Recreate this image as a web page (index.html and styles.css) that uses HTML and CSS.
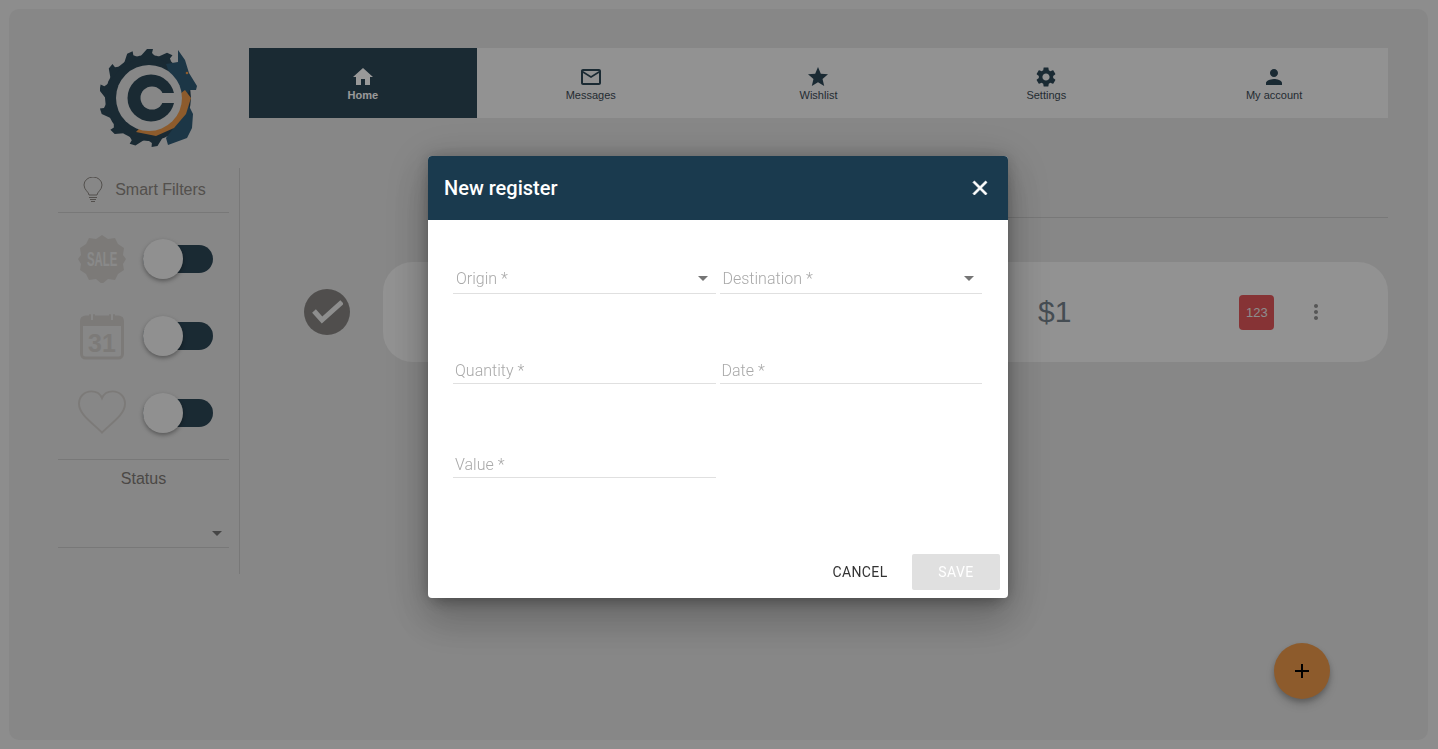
FILE: index.html
```html
<!DOCTYPE html>
<html lang="en">
<head>
  <meta charset="UTF-8" />
  <title>New register</title>
  <link rel="stylesheet" href="styles.css">
</head>
<body>
  <div class="frame">
    <aside class="side">
      <div class="logo">
        <svg width="100" height="102" viewBox="0 0 100 102">
          <defs>
            <path id="tooth" d="M-9-40L-1-49 5-49 4-45 9-40z"/>
          </defs>
          <g fill="#2c4656">
            <circle cx="48" cy="50" r="43"/>
            <use href="#tooth" transform="translate(48 50)"/>
            <use href="#tooth" transform="translate(48 50) rotate(-24)"/>
            <use href="#tooth" transform="translate(48 50) rotate(-52)"/>
            <use href="#tooth" transform="translate(48 50) rotate(-80)"/>
            <use href="#tooth" transform="translate(48 50) rotate(-108)"/>
            <use href="#tooth" transform="translate(48 50) rotate(-136)"/>
            <use href="#tooth" transform="translate(48 50) rotate(-164)"/>
            <use href="#tooth" transform="translate(48 50) rotate(170)"/>
            <use href="#tooth" transform="translate(48 50) rotate(24)"/>
            <use href="#tooth" transform="translate(48 50) rotate(142)"/>
          </g>
          <path fill="#2f5a75" d="M66 16L78 14 78 2 85 12 89 25 97 38 96 42 90 42 85 50 93 66 92 80 87 90 68 97 66 90 84 66z"/>
          <path fill="#eb984a" d="M85 42L91 50 86 66 74 80 56 88 36 84 49 70z"/>
          <circle cx="49" cy="50" r="33" fill="#e1e1e1"/>
          <circle cx="51" cy="50" r="23.500" fill="#2c4656"/>
          <circle cx="52" cy="50" r="11.500" fill="#e1e1e1"/>
          <rect x="56" y="45" width="22" height="10" fill="#e1e1e1"/>
          <circle cx="87" cy="25" r="1.300" fill="#eb984a"/>
        </svg>
      </div>
      <div class="filters">
        <div class="filters-head">
          <svg width="20" height="26" viewBox="0 0 20 26" fill="none" stroke="#8a8580" stroke-width="1">
            <path d="M6 18c0-3-5-5-5-10a9 8 0 0 1 18 0c0 5-5 7-5 10z"/>
            <path d="M6 20.500h8M7 22.500h6M8 24.500h4"/>
          </svg>
          <span>Smart Filters</span>
        </div>
        <div class="filter-row first">
          <svg class="filter-icon" width="48" height="48" viewBox="0 0 48 48">
            <path fill="#cfccc9" d="M24 0l6 4 7-1 3 6 6 4-1 7 3 4-3 5 1 6-6 4-3 6-7-1-6 5-6-5-7 1-3-6-6-4 1-6-3-5 3-4-1-7 6-4 3-6 7 1z"/>
            <text class="sale-text" transform="translate(9 31) scale(.57 1)">SALE</text>
          </svg>
          <div class="toggle"><span class="knob"></span></div>
        </div>
        <div class="filter-row">
          <svg class="filter-icon" width="48" height="48" viewBox="0 0 48 48">
            <rect x="3.500" y="5" width="41" height="41" rx="4" fill="none" stroke="#cfccc9" stroke-width="3"/>
            <rect x="3.500" y="5" width="41" height="9" fill="#cfccc9"/>
            <path fill="none" stroke="#e1e1e1" stroke-width="5" d="M14 0v8M34 0v8"/>
            <path fill="none" stroke="#cfccc9" stroke-width="2" stroke-linecap="round" d="M12 3v6a2 2 0 0 0 4 0V3M32 3v6a2 2 0 0 0 4 0V3"/>
            <text x="24" y="40" class="cal-text">31</text>
          </svg>
          <div class="toggle"><span class="knob"></span></div>
        </div>
        <div class="filter-row">
          <svg class="filter-icon" width="48" height="45" viewBox="0 0 50 46">
            <path fill="none" stroke="#cfccc9" stroke-width="2" d="M25 44C18 36 1 26 1 14 1 6 7 1 14 1c5 0 9 2 11 7 2-5 6-7 11-7 7 0 13 5 13 13 0 12-17 22-24 30z"/>
          </svg>
          <div class="toggle"><span class="knob"></span></div>
        </div>
        <div class="status">
          <p>Status</p>
          <div class="status-select"><span class="caret"></span></div>
        </div>
      </div>
    </aside>

    <main class="content">
      <nav class="tabs">
        <a class="tab active">
          <svg width="24" height="24" viewBox="0 0 24 24"><path d="M10 20v-6h4v6h5v-8h3L12 3 2 12h3v8z"/></svg>
          <span>Home</span>
        </a>
        <a class="tab">
          <svg width="24" height="24" viewBox="0 0 24 24"><path d="M22 6c0-1.100-.9-2-2-2H4c-1.100 0-2 .9-2 2v12c0 1.100.9 2 2 2h16c1.100 0 2-.9 2-2V6zm-2 0l-8 5-8-5h16zm0 12H4V8l8 5 8-5v10z"/></svg>
          <span>Messages</span>
        </a>
        <a class="tab">
          <svg width="24" height="24" viewBox="0 0 24 24"><path d="M12 17.270L18.180 21l-1.640-7.030L22 9.240l-7.190-.61L12 2 9.190 8.630 2 9.240l5.460 4.730L5.820 21z"/></svg>
          <span>Wishlist</span>
        </a>
        <a class="tab">
          <svg width="24" height="24" viewBox="0 0 24 24"><path d="M19.140 12.940c.04-.3.06-.61.06-.94 0-.32-.02-.64-.07-.94l2.030-1.580c.18-.14.23-.41.12-.61l-1.920-3.320c-.12-.22-.37-.29-.59-.22l-2.390.96c-.5-.38-1.030-.7-1.620-.94l-.36-2.540c-.04-.24-.24-.41-.48-.41h-3.840c-.24 0-.43.17-.47.41l-.36 2.540c-.59.24-1.130.57-1.620.94l-2.390-.96c-.22-.08-.47 0-.59.22L2.740 8.870c-.12.21-.08.47.12.61l2.030 1.580c-.05.3-.09.63-.09.94s.02.64.07.94l-2.030 1.580c-.18.14-.23.41-.12.61l1.920 3.320c.12.22.37.29.59.22l2.390-.96c.5.38 1.030.7 1.620.94l.36 2.540c.05.24.24.41.48.41h3.840c.24 0 .44-.17.47-.41l.36-2.540c.59-.24 1.130-.56 1.620-.94l2.390.96c.22.08.47 0 .59-.22l1.920-3.320c.12-.22.07-.47-.12-.61l-2.010-1.580zM12 15.600c-1.980 0-3.600-1.620-3.600-3.600s1.620-3.600 3.600-3.600 3.600 1.620 3.600 3.600-1.620 3.600-3.600 3.600z"/></svg>
          <span>Settings</span>
        </a>
        <a class="tab">
          <svg width="24" height="24" viewBox="0 0 24 24"><path d="M12 12c2.210 0 4-1.790 4-4s-1.790-4-4-4-4 1.790-4 4 1.790 4 4 4zm0 2c-2.670 0-8 1.340-8 4v2h16v-2c0-2.660-5.330-4-8-4z"/></svg>
          <span>My account</span>
        </a>
      </nav>

      <div class="list-rule"></div>

      <div class="list-row">
        <div class="check">
          <svg width="32" height="32" viewBox="0 0 32 32"><path d="M3 15l8 9L31 6" fill="none" stroke="#ededed" stroke-width="5"/></svg>
        </div>
        <div class="item">
          <span class="price">$1</span>
          <span class="badge">123</span>
          <svg class="kebab" width="24" height="24" viewBox="0 0 24 24"><path d="M12 8c1.100 0 2-.9 2-2s-.9-2-2-2-2 .9-2 2 .9 2 2 2zm0 2c-1.100 0-2 .9-2 2s.9 2 2 2 2-.9 2-2-.9-2-2-2zm0 6c-1.100 0-2 .9-2 2s.9 2 2 2 2-.9 2-2-.9-2-2-2z"/></svg>
        </div>
      </div>
    </main>
  </div>

  <button class="fab">
    <svg width="24" height="24" viewBox="0 0 24 24"><path d="M19 13h-6v6h-2v-6H5v-2h6V5h2v6h6v2z"/></svg>
  </button>

  <div class="backdrop"></div>

  <div class="dialog">
    <header class="dialog-head">
      <h2>New register</h2>
      <svg width="24" height="24" viewBox="0 0 24 24"><path fill="#fff" stroke="#fff" stroke-width=".8" d="M19 6.410L17.590 5 12 10.590 6.410 5 5 6.410 10.590 12 5 17.590 6.410 19 12 13.410 17.590 19 19 17.590 13.410 12z"/></svg>
    </header>
    <div class="dialog-body">
      <div class="field-row row-select">
        <div class="field field-select"><label>Origin *</label><span class="caret"></span></div>
        <div class="field field-select"><label>Destination *</label><span class="caret"></span></div>
      </div>
      <div class="field-row row-input">
        <div class="field"><label>Quantity *</label></div>
        <div class="field"><label>Date *</label></div>
      </div>
      <div class="field-row row-input row-last">
        <div class="field"><label>Value *</label></div>
      </div>
    </div>
    <footer class="dialog-foot">
      <button class="btn-cancel">CANCEL</button>
      <button class="btn-save">SAVE</button>
    </footer>
  </div>
</body>
</html>
```

FILE: styles.css
```css
* { box-sizing: border-box; }

html, body { height: 100%; }

body {
  margin: 0;
  padding: 9px 10px 9px 9px;
  background: #ebebeb;
  font-family: "Liberation Sans", Arial, sans-serif;
  overflow: hidden;
}

.frame {
  display: flex;
  height: 731px;
  background: #e1e1e1;
  border-radius: 10px;
  padding: 39px 40px 0 49px;
}

/* sidebar */
.side {
  width: 181px;
  flex: none;
}

.logo {
  height: 120px;
  padding: 0 0 0 42px;
}

.logo svg { display: block; }

.filters {
  height: 406px;
  border-right: 1px solid #c8c8c8;
  margin-right: -1px;
  padding-right: 10px;
}

.filters-head {
  height: 45px;
  display: flex;
  align-items: center;
  justify-content: center;
  gap: 12px;
  border-bottom: 1px solid #c8c8c8;
  color: #8a8580;
  font-size: 16px;
  padding-left: 2px;
}

.filter-row {
  height: 77px;
  display: flex;
  align-items: center;
  padding-left: 20px;
}

.filter-row.first { margin-top: 7px; }

.filter-icon {
  flex: none;
  margin-right: 17px;
}

.sale-text {
  font-family: "Liberation Sans", sans-serif;
  font-weight: 700;
  font-size: 20px;
  fill: #e4e4e4;
}

.cal-text {
  font-family: "Liberation Sans", sans-serif;
  font-weight: 700;
  font-size: 25px;
  fill: #cfccc9;
  text-anchor: middle;
}

.toggle {
  position: relative;
  width: 70px;
  height: 28px;
  border-radius: 14px;
  background: #2c4656;
}

.knob {
  position: absolute;
  left: 0;
  top: -6px;
  width: 40px;
  height: 40px;
  border-radius: 50%;
  background: #f0f0f0;
  box-shadow: 0 2px 4px rgba(0, 0, 0, 0.35);
}

.status {
  margin-top: 8px;
  border-top: 1px solid #c8c8c8;
}

.status p {
  margin: 0;
  padding-top: 10px;
  text-align: center;
  color: #7d7975;
  font-size: 16px;
  line-height: 18px;
}

.status-select {
  position: relative;
  height: 60px;
  border-bottom: 1px solid #c8c8c8;
}

.caret {
  position: absolute;
  right: 7px;
  bottom: 11px;
  border-left: 5px solid transparent;
  border-right: 5px solid transparent;
  border-top: 5px solid #757575;
}

/* main column */
.content {
  flex: 1;
  min-width: 0;
  margin-left: 10px;
}

.tabs {
  display: flex;
  height: 70px;
  background: #f3f3f3;
}

.tab {
  flex: 1;
  display: flex;
  flex-direction: column;
  align-items: center;
  padding-top: 17px;
  fill: #2c4656;
  font-size: 11px;
  line-height: 12px;
}

.tab svg { display: block; }

.tab span { color: #3c4a54; }

.tab.active {
  background: #2c4656;
  fill: #fff;
  font-weight: 700;
}

.tab.active span { color: #fff; }

.list-rule {
  height: 1px;
  margin: 99px 0 0 300px;
  background: #c8c8c8;
}

.list-row {
  display: flex;
  align-items: center;
  margin-top: 44px;
}

.check {
  flex: none;
  width: 46px;
  height: 46px;
  margin-left: 55px;
  margin-right: 33px;
  border-radius: 50%;
  background: #858381;
  display: flex;
  align-items: center;
  justify-content: center;
}

.item {
  flex: 1;
  height: 100px;
  display: flex;
  align-items: center;
  border-radius: 30px;
  background: #f3f3f3;
}

.price {
  margin-left: 655px;
  font-size: 30px;
  color: #74808a;
}

.badge {
  margin-left: 168px;
  width: 35px;
  height: 35px;
  display: flex;
  align-items: center;
  justify-content: center;
  border-radius: 4px;
  background: #e05559;
  color: #eaeaea;
  font-size: 13px;
}

.kebab {
  margin-left: 30px;
  fill: #8f8f8f;
}

.fab {
  position: absolute;
  left: 1274px;
  top: 643px;
  width: 56px;
  height: 56px;
  padding: 0;
  border: none;
  border-radius: 50%;
  background: #eb984a;
  display: flex;
  align-items: center;
  justify-content: center;
  box-shadow: 0 3px 5px rgba(0, 0, 0, 0.2), 0 6px 10px rgba(0, 0, 0, 0.14);
}

.backdrop {
  position: fixed;
  top: 0; left: 0; right: 0; bottom: 0;
  background: rgba(0, 0, 0, 0.4);
}

/* dialog */
.dialog {
  position: fixed;
  left: 428px;
  top: 156px;
  width: 580px;
  height: 442px;
  display: flex;
  flex-direction: column;
  background: #fff;
  border-radius: 4px;
  overflow: hidden;
  font-family: Roboto, sans-serif;
  box-shadow: 0 0 16px rgba(0, 0, 0, 0.22), 0 11px 15px -7px rgba(0, 0, 0, 0.2), 0 24px 38px 3px rgba(0, 0, 0, 0.14), 0 9px 46px 8px rgba(0, 0, 0, 0.12);
}

.dialog-head {
  flex: none;
  height: 64px;
  display: flex;
  align-items: center;
  justify-content: space-between;
  padding: 0 16px 1px;
  background: #1a3a4e;
}

.dialog-head h2 {
  margin: 0;
  color: #fff;
  font-size: 20px;
  font-weight: 500;
}

.dialog-body {
  flex: 1;
  padding: 0 26px 0 25px;
}

.field-row {
  display: flex;
  gap: 4px;
}

.row-select { height: 74px; align-items: flex-end; }
.row-input { height: 90px; align-items: flex-end; }
.row-last { height: 94px; }

.field {
  position: relative;
  width: 263px;
  height: 28px;
  border-bottom: 1px solid #e0e0e0;
  padding: 5px 0 0 2px;
}

.field-select { padding: 5px 0 0 3px; height: 30px; }
.field-select .caret { right: 8px; bottom: 12px; }

.field label {
  color: #a9a9a9;
  font-size: 16px;
  line-height: 20px;
  font-weight: 300;
}

.dialog-foot {
  flex: none;
  display: flex;
  justify-content: flex-end;
  align-items: flex-end;
  gap: 8px;
  height: 44px;
  padding: 0 8px 8px 0;
}

.dialog-foot button {
  height: 36px;
  border: none;
  border-radius: 2px;
  font-family: Roboto, sans-serif;
  font-size: 14px;
  letter-spacing: 0.4px;
}

.btn-cancel {
  width: 88px;
  background: none;
  color: #333;
}

.btn-save {
  width: 88px;
  background: #e0e0e0;
  color: #fff;
}
```
